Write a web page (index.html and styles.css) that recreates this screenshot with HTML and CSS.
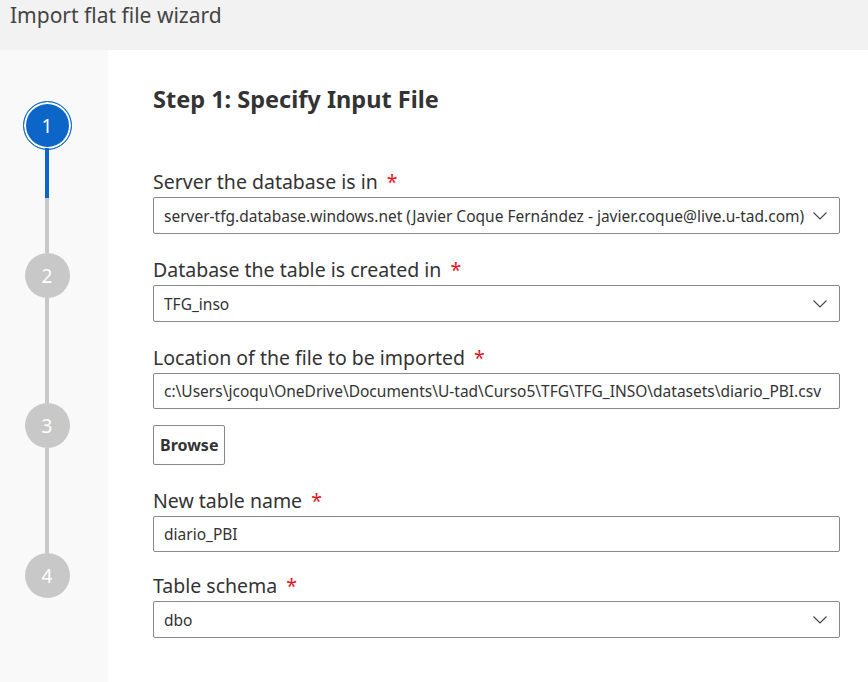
FILE: index.html
```html
<!DOCTYPE html>
<html>
<head>
<meta charset="utf-8">
<link rel="stylesheet" href="styles.css">
</head>
<body>
<header class="topbar">Import flat file wizard</header>
<div class="main">
  <aside class="steps">
    <div class="step active"><span>1</span></div>
    <div class="rail"><div class="rail-done"></div></div>
    <div class="step"><span>2</span></div>
    <div class="rail"></div>
    <div class="step"><span>3</span></div>
    <div class="rail"></div>
    <div class="step"><span>4</span></div>
  </aside>
  <section class="content">
    <h1 class="title">Step 1: Specify Input File</h1>

    <div class="field">
      <label class="label">Server the database is in <em>*</em></label>
      <div class="control select">
        <span class="value">server-tfg.database.windows.net (Javier Coque Fernández - javier.coque@live.u-tad.com)</span>
        <svg class="chev" width="14" height="8" viewBox="0 0 14 8"><path d="M0.5 0.5 L7 7 L13.5 0.5" fill="none" stroke="#444" stroke-width="1.1"/></svg>
      </div>
    </div>

    <div class="field">
      <label class="label">Database the table is created in <em>*</em></label>
      <div class="control select">
        <span class="value">TFG_inso</span>
        <svg class="chev" width="14" height="8" viewBox="0 0 14 8"><path d="M0.5 0.5 L7 7 L13.5 0.5" fill="none" stroke="#444" stroke-width="1.1"/></svg>
      </div>
    </div>

    <div class="field">
      <label class="label">Location of the file to be imported <em>*</em></label>
      <div class="control text">
        <span class="value">c:\Users\jcoqu\OneDrive\Documents\U-tad\Curso5\TFG\TFG_INSO\datasets\diario_PBI.csv</span>
      </div>
      <button class="browse">Browse</button>
    </div>

    <div class="field tight">
      <label class="label">New table name <em>*</em></label>
      <div class="control text">
        <span class="value">diario_PBI</span>
      </div>
    </div>

    <div class="field">
      <label class="label">Table schema <em>*</em></label>
      <div class="control select">
        <span class="value">dbo</span>
        <svg class="chev" width="14" height="8" viewBox="0 0 14 8"><path d="M0.5 0.5 L7 7 L13.5 0.5" fill="none" stroke="#444" stroke-width="1.1"/></svg>
      </div>
    </div>
  </section>
</div>
</body>
</html>
```
FILE: styles.css
```css
* { box-sizing: border-box; }
html, body { margin: 0; padding: 0; }
body {
  width: 868px;
  height: 682px;
  overflow: hidden;
  font-family: "Noto Sans", "Open Sans", sans-serif;
  color: #333;
  background: #fff;
}
.topbar {
  height: 50px;
  background: #f2f2f2;
  padding: 1px 0 0 10px;
  font-size: 21px;
  line-height: 28px;
  color: #444;
}
.main {
  display: flex;
  height: 632px;
}
.steps {
  width: 108px;
  flex: none;
  background: #f9f9f9;
  display: flex;
  flex-direction: column;
  align-items: center;
  padding-top: 53px;
  padding-right: 14px;
}
.step {
  width: 45px;
  height: 45px;
  border-radius: 50%;
  background: #c8c8c8;
  color: #fff;
  display: flex;
  align-items: center;
  justify-content: center;
  font-size: 19px;
  flex: none;
}
.step.active {
  width: 49px;
  height: 49px;
  background: #0b66c8;
  border: 1px solid #0b66c8;
  box-shadow: inset 0 0 0 2px #fff;
  margin: -2px 0 -2px;
}
.rail {
  width: 4px;
  height: 105px;
  background: #c8c8c8;
  flex: none;
}
.rail-done {
  height: 50px;
  background: #0b66c8;
}
.content {
  flex: 1;
  padding: 33px 28px 0 45px;
}
.title {
  margin: 0 0 54px;
  font-size: 23.5px;
  line-height: 32px;
  font-weight: 700;
  color: #333;
}
.field {
  margin-bottom: 23px;
}
.field.tight {
  margin-bottom: 21px;
}
.label {
  display: block;
  font-size: 19.5px;
  line-height: 26px;
  margin-bottom: 2px;
  color: #333;
}
.label em {
  font-style: normal;
  color: #e81123;
  margin-left: 4px;
}
.control {
  height: 37px;
  border: 1px solid #8a8886;
  border-radius: 2px;
  display: flex;
  align-items: center;
  padding: 0 12px 0 10px;
  font-size: 15.5px;
  color: #333;
  white-space: nowrap;
  overflow: hidden;
}
.control.text { height: 36px; }
.value { flex: 1; overflow: hidden; }
.chev { flex: none; margin-left: 6px; }
.browse {
  display: block;
  margin-top: 16px;
  height: 40px;
  padding: 0 6px;
  border: 1px solid #8a8886;
  border-radius: 2px;
  background: #fff;
  font-family: inherit;
  font-size: 16px;
  font-weight: 700;
  color: #333;
}
```
